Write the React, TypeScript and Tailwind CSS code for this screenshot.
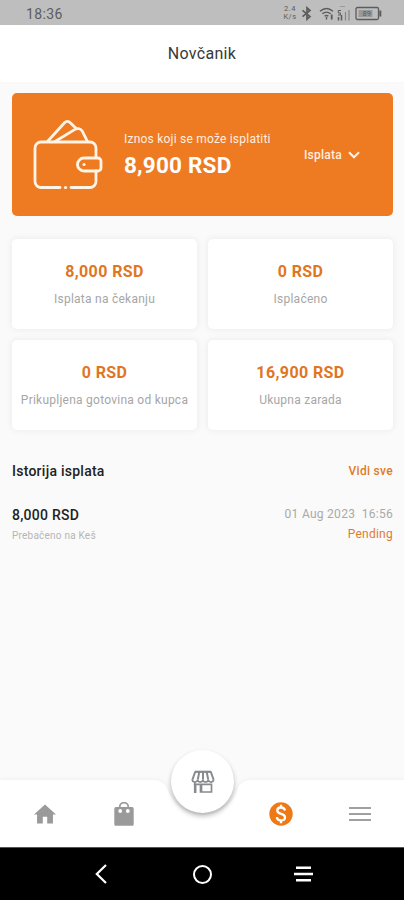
import React from "react";

const stats = [
  { value: "8,000 RSD", label: "Isplata na čekanju" },
  { value: "0 RSD", label: "Isplaćeno" },
  { value: "0 RSD", label: "Prikupljena gotovina od kupca" },
  { value: "16,900 RSD", label: "Ukupna zarada" },
];

function StatusBar() {
  return (
    <div className="flex h-[25px] shrink-0 items-center bg-[#bebebe] pl-[26px] pr-[21px] text-[#5c5c5c]">
      <span className="pt-[2px] text-[14px] leading-none tracking-[0.35px]">18:36</span>
      <div className="ml-auto flex items-center pt-px">
        <div className="flex w-[14px] flex-col text-center text-[7.5px] leading-[8px] tracking-[0.5px]">
          <span>2.4</span>
          <span>K/s</span>
        </div>
        <svg className="ml-[4px]" width="12" height="15" viewBox="0 0 12 15" fill="none" stroke="currentColor" strokeWidth="1.7">
          <path d="M1.500 4.300 9 10.500 6 13.200V1.800L9 4.500 1.500 10.700" />
        </svg>
        <svg className="ml-[6px]" width="17" height="15" viewBox="0 0 17 15" fill="none" stroke="currentColor" strokeWidth="1.4">
          <path d="M1 5.200c4-3.400 9-3.400 13 0M3.300 7.800c2.600-2.100 5.800-2.100 8.400 0M5.600 10.200c1.300-.9 2.500-.9 3.800 0" />
          <path d="M7.500 11v2.500" />
          <path d="M12.700 8.500v5" strokeWidth="1.800" />
        </svg>
        <svg className="ml-px" width="14" height="17" viewBox="0 0 14 17" fill="none" stroke="currentColor">
          <path d="M1.500 12v3.500M4.500 10v5.500" strokeWidth="1.500" />
          <path d="M8.500 7v8.500M12 5v10.500" stroke="#858585" strokeWidth="1.200" />
          <path d="M4 5.500H1.300V8H3.500v2H1" strokeWidth="1" />
          <path d="M3 1.500h5" stroke="#999" />
        </svg>
        <svg className="ml-[4px]" width="28" height="15" viewBox="0 0 28 15" fill="none" stroke="currentColor">
          <rect x="1" y="1.500" width="22.500" height="12" rx="1.500" strokeWidth="1.300" />
          <rect x="3.500" y="4" width="14" height="7" fill="#999" stroke="none" />
          <path d="M25.300 4.500v6" strokeWidth="2" />
          <text x="7.500" y="10.200" fontSize="7.500" fill="#5c5c5c" stroke="none" fontFamily="Roboto">89</text>
        </svg>
      </div>
    </div>
  );
}

function WalletIcon() {
  return (
    <svg width="70" height="70" viewBox="0 0 70 70" fill="none" stroke="#fff4e6" strokeWidth="2.8" strokeLinecap="round" strokeLinejoin="round">
      <path d="M27 67.500H8a6 6 0 0 1-6-6V28a6 6 0 0 1 6-6h49a6 6 0 0 1 6 6v9M63 51v10.500a6 6 0 0 1-6 6H38" />
      <path d="M32.500 67.500h.1" strokeWidth="3.200" />
      <path d="M51 38h14a3 3 0 0 1 3 3v7a3 3 0 0 1-3 3H51a6.500 6.500 0 0 1 0-13Z" />
      <path d="M51 44.500h.1" strokeWidth="3" />
      <path d="M14.500 21.500 31.500 2.700a4 4 0 0 1 5.800 0l5.700 5.600M22 21.500 42 9.400c3-1.700 6-.7 7.400 2l5 10" />
    </svg>
  );
}

function StoreIcon() {
  return (
    <svg width="24" height="24" viewBox="0 0 24 24" fill="none" stroke="#888b8e" strokeWidth="1.700">
      <path d="M4 1.800h16" strokeWidth="2.200" />
      <path d="M4.300 1.500 1.500 9.500M19.700 1.500l2.800 8M8.300 2 6.800 9.500M12 2v7.500M15.700 2l1.500 7.500" strokeWidth="2" />
      <path d="M1.300 9.300c0 3.600 5.300 3.600 5.300.3 0 3.300 5.300 3.300 5.300 0 0 3.300 5.400 3.300 5.400 0 0 3.300 5.300 3.300 5.300-.3" />
      <path d="M3.800 12.500v10M2.800 14.300h6.700v8.500M10.500 14.300h10v7.700h-10z" />
      <path d="M4.200 14v9" strokeWidth="2.500" />
    </svg>
  );
}

export default function App() {
  return (
    <div className="flex h-[900px] w-[404px] flex-col overflow-hidden bg-[#fafafa] font-['Roboto',sans-serif]">
      <StatusBar />
      <header className="flex h-[57px] shrink-0 items-center justify-center bg-white pt-px text-[16px] tracking-[0.3px] text-[#383838] shadow-[0_1px_3px_rgba(0,0,0,0.015)]">
        Novčanik
      </header>

      <main className="flex grow flex-col pl-3 pr-[11px] pt-[11px]">
        <section className="flex h-[123px] items-center rounded-[5px] bg-[#ee7a22] pl-[21px] pr-[33px] text-[#fff0e0]">
          <WalletIcon />
          <div className="ml-[21px] flex flex-col">
            <span className="whitespace-nowrap text-[12px] leading-[16px] tracking-[0.22px]">Iznos koji se može isplatiti</span>
            <span className="mt-[4px] whitespace-nowrap text-[22.500px] font-bold leading-[28px] tracking-[0.2px] text-white">8,900 RSD</span>
          </div>
          <div className="ml-auto flex items-center gap-[6px] text-[12px] font-medium tracking-[0.25px]">
            <span>Isplata</span>
            <svg width="12" height="8" viewBox="0 0 12 8" fill="none" stroke="currentColor" strokeWidth="2.200">
              <path d="m1 1.200 5 5 5-5" />
            </svg>
          </div>
        </section>

        <section className="mt-[23px] grid grid-cols-2 gap-[11px]">
          {stats.map((s) => (
            <div key={s.label} className="flex h-[90px] flex-col items-center rounded-[5px] bg-white pt-[22px] shadow-[0_0_6px_1px_rgba(0,0,0,0.055)]">
              <span className="text-[16px] font-bold leading-[22px] tracking-[0.4px] text-[#e0761f]">{s.value}</span>
              <span className="mt-[8px] whitespace-nowrap text-[12px] leading-[16px] tracking-[0.25px] text-[#a6a6a6]">{s.label}</span>
            </div>
          ))}
        </section>

        <div className="mt-[31px] flex h-[20px] items-center justify-between">
          <h2 className="text-[14px] font-medium tracking-[0.25px] text-[#222]">Istorija isplata</h2>
          <span className="text-[12px] font-medium tracking-[0.3px] text-[#e07a2a]">Vidi sve</span>
        </div>

        <div className="mt-[24px] flex justify-between">
          <div className="flex flex-col">
            <span className="text-[14px] font-medium leading-[20px] tracking-[0.25px] text-[#222]">8,000 RSD</span>
            <span className="mt-[4px] text-[10px] leading-[14px] tracking-[0.22px] text-[#b5b5b5]">Prebačeno na Keš</span>
          </div>
          <div className="flex flex-col items-end">
            <span className="whitespace-pre text-[12px] leading-[18px] tracking-[0.28px] text-[#a9a9a9]">01 Aug 2023  16:56</span>
            <span className="mt-[3px] text-[12px] leading-[16px] tracking-[0.25px] text-[#df7b30]">Pending</span>
          </div>
        </div>
      </main>

      <nav className="relative flex h-[67px] shrink-0 items-center">
        <svg className="absolute -top-[4px] left-0" width="404" height="71" viewBox="0 0 404 71">
          <path d="M0 4H153C164 4 166 10 169 17A36.500 36.500 0 0 0 236 17C239 10 241 4 252 4H404V71H0Z" fill="#fff" className="drop-shadow-[0_-1px_2px_rgba(0,0,0,0.04)]" />
        </svg>
        <div className="absolute -top-[30px] left-[171px] flex size-[63px] items-center justify-center rounded-full bg-white shadow-[0_3px_5px_rgba(0,0,0,0.28)]">
          <StoreIcon />
        </div>
        <div className="relative flex w-full items-center pl-[34px] pr-[33px]">
          <svg width="22" height="20" viewBox="0 0 23 20" fill="#9a9a9a">
            <path d="M11.500 0 23 10.500h-3.200V20h-6v-7H9.200v7h-6v-9.500H0Z" />
          </svg>
          <svg className="ml-[58px]" width="20" height="24" viewBox="0 0 20 24">
            <path d="M5.700 8V5a4.300 4.300 0 0 1 8.600 0V8" fill="none" stroke="#9a9a9a" strokeWidth="1.800" />
            <path d="M1.800 5h16.400a1.500 1.500 0 0 1 1.500 1.500v15.800a1.500 1.500 0 0 1-1.500 1.500H1.800A1.500 1.500 0 0 1 .3 22.300V6.500A1.500 1.500 0 0 1 1.800 5Z" fill="#9a9a9a" />
            <circle cx="6.200" cy="9" r="1.900" fill="#fff" />
            <circle cx="13.800" cy="9" r="1.900" fill="#fff" />
          </svg>
          <svg className="ml-auto" width="24" height="24" viewBox="0 0 24 24">
            <circle cx="12" cy="12" r="11.700" fill="#ee7917" />
            <path d="M16 8.500C15.600 6.500 14 5.500 12 5.500S8.300 6.700 8.300 8.600c0 4.400 7.700 2.300 7.700 6.700 0 2-1.700 3.200-4 3.200s-3.900-1.200-4.200-3.300M12 2.800v3M12 18.200v3" fill="none" stroke="#fff" strokeWidth="2.300" />
          </svg>
          <svg className="ml-[56px]" width="22" height="16" viewBox="0 0 22 16" stroke="#a0a0a0" strokeWidth="2">
            <path d="M0 2h22M0 8h22M0 14h22" />
          </svg>
        </div>
      </nav>

      <footer className="flex h-[53px] shrink-0 items-center border-t border-[#555] bg-black pl-[95px]">
        <svg width="12" height="20" viewBox="0 0 12 20" fill="none" stroke="#fff" strokeWidth="2.200">
          <path d="M11 1 1.800 10 11 19" />
        </svg>
        <span className="ml-[86px] size-[19px] rounded-full border-[2.500px] border-white" />
        <svg className="ml-[82px]" width="19" height="16" viewBox="0 0 19 16" stroke="#fff" strokeWidth="2.500">
          <path d="M2 1.700h15M0 8h19M2 14.300h15" />
        </svg>
      </footer>
    </div>
  );
}
